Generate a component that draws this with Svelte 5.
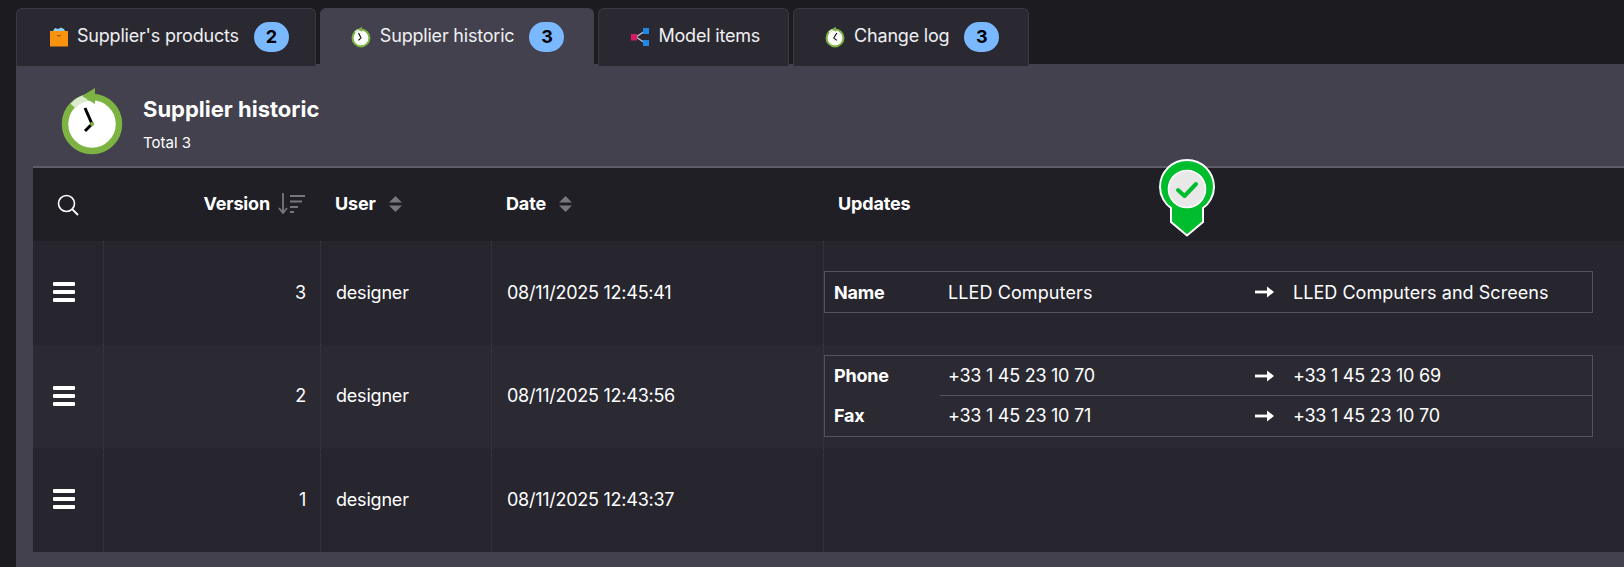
<script>
  const tabs = [
    { label: "Supplier's products", badge: 2, icon: 'box', cls: 't1' },
    { label: 'Supplier historic', badge: 3, icon: 'clock', active: true, cls: 't2' },
    { label: 'Model items', icon: 'model', cls: 't3' },
    { label: 'Change log', badge: 3, icon: 'clockb', cls: 't4' }
  ];
  const rows = [
    { v: 3, user: 'designer', date: '08/11/2025 12:45:41', changes: [{ k: 'Name', a: 'LLED Computers', b: 'LLED Computers and Screens' }] },
    { v: 2, user: 'designer', date: '08/11/2025 12:43:56', changes: [
      { k: 'Phone', a: '+33 1 45 23 10 70', b: '+33 1 45 23 10 69', num: true },
      { k: 'Fax', a: '+33 1 45 23 10 71', b: '+33 1 45 23 10 70', num: true }
    ] },
    { v: 1, user: 'designer', date: '08/11/2025 12:43:37', changes: [] }
  ];
</script>

{#snippet clock(mirror)}
  <svg class="clock" viewBox="0 0 64 70">
    <circle cx="32" cy="38" r="27" fill="#fff" stroke="#7cb342" stroke-width="6.5" />
    <path d="M13 20 A27 27 0 0 1 27 11.5" fill="none" stroke="#dcebcf" stroke-width="6.5" />
    <path d="M35 2 L35 18 L22 10 Z" fill="#7cb342" />
    {#if mirror}
      <path d="M38 22 L28 38 L38 46" fill="none" stroke="#000" stroke-width="3.4" />
    {:else}
      <path d="M24 22 L32 38 L24 46" fill="none" stroke="#000" stroke-width="3.4" />
    {/if}
    <circle cx={mirror ? 28 : 32} cy="38" r="2" fill="#7cb342" />
  </svg>
{/snippet}

{#snippet updown()}
  <svg class="updown" viewBox="0 0 13 16"><path d="M6.5 0 L13 6.6 H0 Z M0 9.4 H13 L6.5 16 Z" fill="#77767d" /></svg>
{/snippet}

<div class="page">
  <nav class="tabs">
    {#each tabs as t}
      <div class="tab {t.cls}" class:active={t.active}>
        {#if t.icon === 'box'}
          <svg class="ti" viewBox="0 0 18 20">
            <path d="M3 4 L5 1 L8 2 L11 0.5 L14 2 L15 4 Z" fill="#8fd0f2" />
            <path d="M0 4 H18 V19.5 H0 Z" fill="#f7930f" />
            <path d="M7 8 H11 V9.4 H7 Z" fill="#a85f00" />
          </svg>
        {:else if t.icon === 'clock'}
          {@render clock(false)}
        {:else if t.icon === 'clockb'}
          {@render clock(true)}
        {:else}
          <svg class="ti" viewBox="0 0 18 18">
            <path d="M5 9 L14 3 M5 9 L14 15" stroke="#b9c4d6" stroke-width="1.4" fill="none" />
            <rect x="0" y="6" width="6" height="6.5" fill="#d81b60" />
            <rect x="12" y="0" width="6" height="6" fill="#1e88e5" />
            <rect x="12" y="12" width="6" height="6" fill="#1e88e5" />
          </svg>
        {/if}
        <span class="tl">{t.label}</span>
        {#if t.badge}<span class="badge">{t.badge}</span>{/if}
      </div>
    {/each}
  </nav>

  <main class="panel">
    <header class="head">
      <svg class="bigclock" viewBox="0 0 64 70">
        <circle cx="32" cy="38" r="27" fill="#fff" stroke="#7cb342" stroke-width="6.5" />
        <path d="M13 20 A27 27 0 0 1 27 11.5" fill="none" stroke="#dcebcf" stroke-width="6.5" />
        <path d="M35 2 L35 18 L22 10 Z" fill="#7cb342" />
        <path d="M25 22 L32 38 L25 45" fill="none" stroke="#000" stroke-width="3" />
        <circle cx="32" cy="38" r="2" fill="#7cb342" />
      </svg>
      <div class="titles">
        <h1>Supplier historic</h1>
        <p>Total 3</p>
      </div>
    </header>

    <section class="table">
      <div class="row thead">
        <div class="c c0">
          <svg class="search" viewBox="0 0 22 22"><circle cx="9.5" cy="9.5" r="8" fill="none" stroke="#fff" stroke-width="1.6" /><path d="M15.5 15.5 L21 21" stroke="#fff" stroke-width="1.8" /></svg>
        </div>
        <div class="c c1 th">Version
          <svg class="sort" viewBox="0 0 27 21"><path d="M5 0 V19 M1 15 L5 20 L9 15" fill="none" stroke="#77767d" stroke-width="1.8" /><path d="M12 3 H27 M12 8.5 H24 M12 14 H20 M12 19 H16" stroke="#77767d" stroke-width="1.8" /></svg>
        </div>
        <div class="c c2 th">User {@render updown()}</div>
        <div class="c c3 th">Date {@render updown()}</div>
        <div class="c c4 th">Updates</div>
        <svg class="pin" viewBox="0 0 56 78">
          <path d="M28 1 C13 1 1 13 1 28 C1 37 6 45 12 49 V63 L28 76.5 L44 63 V49 C50 45 55 37 55 28 C55 13 43 1 28 1 Z" fill="#00bd2e" stroke="#fff" stroke-width="2" />
          <circle cx="28" cy="30" r="18.5" fill="#e8e8e8" stroke="#fff" stroke-width="1.6" />
          <path d="M19 31 L25.5 37 L37 25" fill="none" stroke="#00bd2e" stroke-width="4" stroke-linecap="round" stroke-linejoin="round" />
        </svg>
      </div>
      {#each rows as r, i}
        <div class="row body" class:odd={i % 2 === 1} class:mid={i === 1}>
          <div class="c c0 sep"><span class="burger"><i></i><i></i><i></i></span></div>
          <div class="c c1 sep">{r.v}</div>
          <div class="c c2 sep">{r.user}</div>
          <div class="c c3 sep num">{r.date}</div>
          <div class="c c4 sep">
            {#if r.changes.length}
              <div class="changes">
                {#each r.changes as ch, j}
                  <div class="change" class:next={j > 0}>
                    <b class="k">{ch.k}</b>
                    <span class="a" class:num={ch.num}>{ch.a}</span>
                    <svg class="arr" viewBox="0 0 19 12"><path d="M0 6 H14" stroke="#fff" stroke-width="2.8" /><path d="M12 0.5 L19 6 L12 11.5 Z" fill="#fff" /></svg>
                    <span class="b" class:num={ch.num}>{ch.b}</span>
                  </div>
                {/each}
              </div>
            {/if}
          </div>
        </div>
      {/each}
    </section>
  </main>
</div>

<style>
  :global(body) { margin: 0; background: #1c1b20; }
  .page {
    width: 1624px; height: 567px; overflow: hidden;
    font-family: Inter, "Liberation Sans", sans-serif;
    color: #fff; font-size: 18px; letter-spacing: -0.2px;
    padding: 8px 0 0 16px; box-sizing: border-box;
  }
  .tabs { display: flex; gap: 4px; height: 56px; position: relative; z-index: 1; }
  .tab {
    height: 58px; box-sizing: border-box;
    display: flex; align-items: center; gap: 9px;
    padding: 0 26px 2px 33px;
    background: #2a2932; border: 1px solid #3b3a44; border-bottom: 0;
    border-radius: 6px 6px 0 0; color: #f0f0f2;
  }
  .tab.active { background: #42414d; border-color: #42414d; height: 56px; padding-bottom: 0; }
  .t2 { padding-left: 30px; padding-right: 29px; }
  .t3 { padding-left: 32px; padding-right: 28px; }
  .t4 { padding-left: 31px; padding-right: 29px; }
  .tl { padding-bottom: 2px; }
  .ti { width: 18px; height: 20px; display: block; flex: none; }
  .clock { width: 20px; height: 22px; display: block; flex: none; }
  .badge {
    width: 35px; height: 30px; border-radius: 15px; margin-left: 6px;
    background: #7ab8ff; color: #000; font-weight: 700;
    display: flex; align-items: center; justify-content: center;
    letter-spacing: 0;
  }
  .panel { background: #42414d; height: 503px; padding-left: 17px; box-sizing: border-box; }
  .head { height: 104px; display: flex; align-items: flex-start; box-sizing: border-box; border-bottom: 2px solid #5f5e68; }
  .bigclock { width: 64px; height: 70px; margin: 22px 0 0 27px; flex: none; }
  .titles { margin-left: 19px; }
  h1 { margin: 32px 0 0; font-size: 22px; line-height: 26px; font-weight: 700; letter-spacing: 0; }
  p { margin: 11px 0 0; font-size: 15px; line-height: 20px; letter-spacing: 0; }
  .table { background: #27262e; height: 384px; }
  .row { display: grid; grid-template-columns: 70px 217px 171px 332px 1fr; position: relative; }
  .thead { height: 73px; background: #201f26; }
  .body { height: 104px; background: #27262e; }
  .body.odd { background: #2b2a33; }
  .body.mid { height: 103px; }
  .c { display: flex; align-items: center; padding-left: 15px; box-sizing: border-box; }
  .c0 { padding-left: 0; justify-content: center; }
  .body .c0 { padding-right: 8px; }
  .c1 { justify-content: flex-end; padding: 0 14px 0 0; }
  .body .c1, .body .c2, .body .c3 { padding-bottom: 2px; }
  .th { font-weight: 700; letter-spacing: -0.15px; padding-bottom: 2px; }
  .thead .c1 { padding-right: 15px; }
  .num { letter-spacing: -0.26px; }
  .search { width: 22px; height: 22px; }
  .sort { width: 27px; height: 21px; margin-left: 8px; }
  .updown { width: 13px; height: 16px; margin-left: 13px; }
  .sep { border-left: 1px dotted #3d3c45; }
  .c0.sep { border-left: 0; }
  .c4.sep { padding: 0; align-items: center; }
  .burger { display: flex; flex-direction: column; gap: 4px; width: 22px; margin-top: -2px; }
  .burger i { display: block; height: 4px; background: #fff; border-radius: 1px; }
  .changes { width: 769px; margin-top: -2px; border: 1px solid #54535c; box-sizing: border-box; }
  .change { height: 40px; display: flex; align-items: center; position: relative; }
  .change.next::before { content: ""; position: absolute; left: 115px; right: 0; top: -1px; border-top: 1px solid #54535c; }
  .k { width: 123px; padding-left: 9px; box-sizing: border-box; flex: none; }
  .a { width: 307px; flex: none; letter-spacing: 0.1px; }
  .b { margin-left: 19px; letter-spacing: 0.04px; }
  .a.num, .b.num { letter-spacing: -0.26px; }
  .arr { width: 19px; height: 12px; flex: none; }
  .pin { position: absolute; left: 1126px; top: -9px; width: 56px; height: 78px; }
</style>
